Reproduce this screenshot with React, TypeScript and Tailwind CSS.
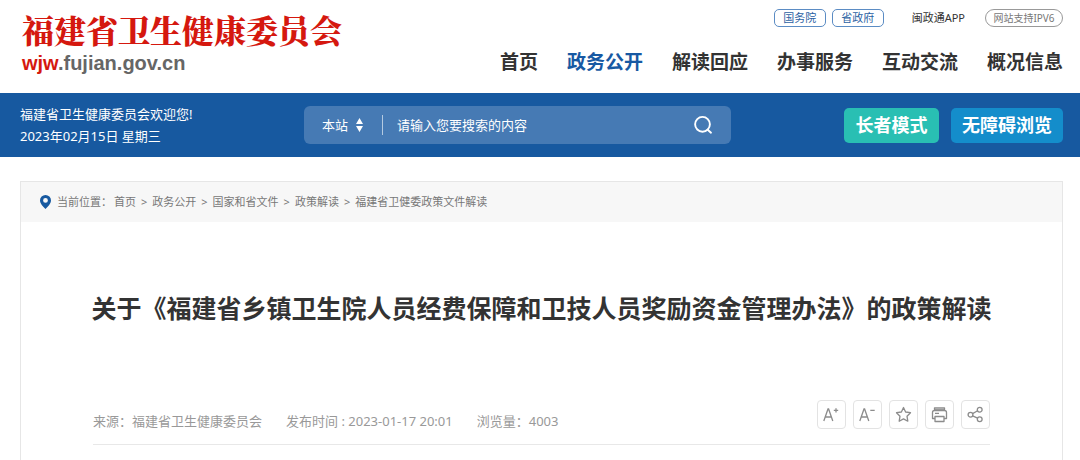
import React, { useState } from 'react';

const TOP_LINKS = ['国务院', '省政府'];
const NAV_ITEMS = ['首页', '政务公开', '解读回应', '办事服务', '互动交流', '概况信息'];
const CRUMBS = ['首页', '政务公开', '国家和省文件', '政策解读', '福建省卫健委政策文件解读'];

const Header: React.FC = () => (
  <header className="flex justify-between pl-[22px] pr-[17px] h-[93px]">
    <a href="#" className="flex flex-col pt-[5px]">
      <span className="text-[32px] leading-[48px] font-black text-[#d5180f] font-['Noto_Serif_CJK_SC','Noto_Sans_CJK_SC',serif]">福建省卫生健康委员会</span>
      <span className="text-[20px] leading-[20px] font-bold text-[#666] font-['Liberation_Sans',sans-serif]">
        <span className="text-[#d5180f]">wjw</span>.fujian.gov.cn
      </span>
    </a>
    <div className="flex flex-col items-end pt-[9px]">
      <div className="flex items-center text-[11px] leading-4">
        <div className="flex gap-[6px]">
          {TOP_LINKS.map(label => (
            <a key={label} href="#" className="w-[52px] h-[18px] rounded-[5px] border border-[#5b8cc4] text-center text-[#2d62a3]">{label}</a>
          ))}
        </div>
        <a href="#" className="ml-7 text-[#333]">闽政通APP</a>
        <a href="#" className="ml-5 w-[78px] h-[18px] rounded-full border border-[#999] text-center text-[10px] text-[#777]">网站支持IPV6</a>
      </div>
      <nav className="mt-[21px] flex gap-[29px] text-[19px] leading-7 font-bold">
        {NAV_ITEMS.map(item => (
          <a key={item} href="#" className={item === '政务公开' ? 'text-[#1759a3]' : 'text-[#333]'}>{item}</a>
        ))}
      </nav>
    </div>
  </header>
);

const SearchBar: React.FC = () => {
  const [keyword, setKeyword] = useState('');

  return (
    <form className="flex-1 mr-[113px] h-[38px] flex items-center rounded-[6px] bg-[#467ab4] pl-[18px] pr-[18px] text-[13px]" onSubmit={e => e.preventDefault()}>
      <div className="relative flex items-center">
        <select aria-label="搜索范围" className="appearance-none bg-transparent w-[42px] h-6 leading-6 text-white outline-none">
          <option>本站</option>
        </select>
        <svg className="absolute left-[34px] pointer-events-none" width="7" height="14" viewBox="0 0 7 14" fill="#fff">
          <path d="M3.5 0 7 6H0zM3.5 14 0 8H7z" />
        </svg>
      </div>
      <span className="ml-[18px] w-px h-5 bg-[#b4cae1]" />
      <input
        type="text"
        aria-label="搜索"
        placeholder="请输入您要搜索的内容"
        value={keyword}
        onChange={e => setKeyword(e.target.value)}
        className="ml-[14px] min-w-0 flex-1 h-6 bg-transparent text-white placeholder:text-white outline-none"
      />
      <button type="submit" aria-label="搜索">
        <svg width="20" height="20" viewBox="0 0 20 20" fill="none" stroke="#fff" strokeWidth="1.9">
          <circle cx="9.5" cy="9.3" r="7.4" />
          <path d="m14.7 14.7 3.3 3" strokeLinecap="round" />
        </svg>
      </button>
    </form>
  );
};

const toolClass = 'w-[29px] h-[29px] flex items-center justify-center rounded-[4px] border border-[#e3e3e3]';

const iconProps = { width: 17, height: 17, viewBox: '0 0 17 17', fill: 'none', stroke: '#8c8c8c', strokeWidth: 1.3 };

const Tools: React.FC = () => (
  <div className="flex gap-[7px]">
    <button type="button" aria-label="放大字体" className={toolClass}>
      <svg {...iconProps}>
        <path d="M.8 15 5 3h.6l4.200 12M2.300 11h6M10.800 4.300h4.400M13 2.200v4.200" />
      </svg>
    </button>
    <button type="button" aria-label="缩小字体" className={toolClass}>
      <svg {...iconProps}>
        <path d="M.8 15 5 3h.6l4.200 12M2.300 11h6M11.300 4.300h4.400" />
      </svg>
    </button>
    <button type="button" aria-label="收藏" className={toolClass}>
      <svg {...iconProps} strokeLinejoin="round">
        <path d="m8.500 1.500 2.100 4.500 4.900.7-3.500 3.500.8 5-4.300-2.300-4.300 2.300.8-5L1.500 6.700l4.900-.7z" />
      </svg>
    </button>
    <button type="button" aria-label="打印" className={toolClass}>
      <svg {...iconProps} strokeLinejoin="round">
        <path d="M3.500 4.500V1.800h10v2.700M3.800 12.500H1.500v-6q0-2 2-2h10q2 0 2 2v6h-2.300M4 7.300h4M4 10.500h9v5H4z" />
        <path d="M3.500 3.200h10" />
      </svg>
    </button>
    <button type="button" aria-label="分享" className={toolClass}>
      <svg {...iconProps}>
        <circle cx="3.500" cy="8.700" r="2.400" />
        <circle cx="12.700" cy="3.700" r="2.400" />
        <circle cx="12.700" cy="13.200" r="2.400" />
        <path d="m5.600 7.600 5-2.800M5.600 9.800l5 2.400" />
      </svg>
    </button>
  </div>
);

const App: React.FC = () => (
  <div className="min-w-[1000px] bg-white font-['Noto_Sans','Noto_Sans_CJK_SC',sans-serif]">
    <Header />

    <div className="flex items-center h-16 pl-5 pr-[17px] bg-[#1759a0]">
      <div className="w-[284px] text-[13px] leading-[22px] text-white">
        <p>福建省卫生健康委员会欢迎您!</p>
        <p>2023年02月15日 星期三</p>
      </div>
      <SearchBar />
      <div className="flex gap-3 text-[18px] font-bold text-white">
        <button type="button" className="w-[95px] h-[35px] rounded-[5px] bg-[#29bfb3]">长者模式</button>
        <button type="button" className="w-[112px] h-[35px] rounded-[5px] bg-[#148dcb]">无障碍浏览</button>
      </div>
    </div>

    <main className="mt-6 ml-5 mr-[17px] border border-[#e6e6e6]">
      <div className="flex items-center h-10 pl-[19px] bg-[#f7f7f7] text-[11px] text-[#777]">
        <svg width="11" height="14" viewBox="0 0 11 14" fill="#1759a0">
          <path fillRule="evenodd" d="M5.500 0A5.500 5.500 0 0 1 11 5.500C11 8.500 8 11.500 5.500 14 3 11.500 0 8.500 0 5.500A5.500 5.500 0 0 1 5.500 0zm0 3a2.400 2.400 0 1 0 0 4.800 2.400 2.400 0 0 0 0-4.800z" />
        </svg>
        <span className="ml-[6px]">当前位置：</span>
        <nav className="ml-[2px] flex gap-[5px]">
          {CRUMBS.map((crumb, i) => (
            <React.Fragment key={crumb}>
              {i > 0 && <span>&gt;</span>}
              <a href="#">{crumb}</a>
            </React.Fragment>
          ))}
        </nav>
      </div>

      <article className="px-[72px] pb-4">
        <h1 className="flex justify-center pt-[66px] text-[25px] leading-[40px] font-bold text-[#333] whitespace-nowrap">
          关于《福建省乡镇卫生院人员经费保障和卫技人员奖励资金管理办法》的政策解读
        </h1>
        <div className="mt-[72px] flex items-start justify-between h-[45px] border-b border-[#e8e8e8]">
          <div className="flex gap-6 pt-[11px] text-[13px] leading-5 text-[#999]">
            <span>来源：福建省卫生健康委员会</span>
            <span>发布时间 : 2023-01-17 20:01</span>
            <span>浏览量：4003</span>
          </div>
          <Tools />
        </div>
      </article>
    </main>
  </div>
);

export default App;
